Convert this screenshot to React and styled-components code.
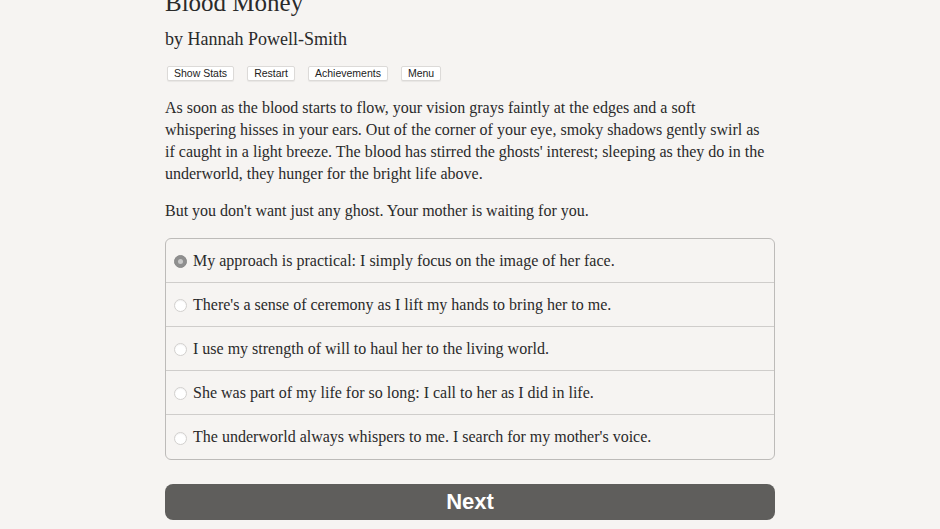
import { useState } from "react";
import styled, { createGlobalStyle } from "styled-components";

const GlobalStyle = createGlobalStyle`
  html, body {
    margin: 0;
    padding: 0;
    background: #f6f4f2;
  }
  body {
    font-family: "Liberation Serif", "DejaVu Serif", serif;
    color: #2a2a2a;
    overflow: hidden;
  }
`;

const choices = [
  "My approach is practical: I simply focus on the image of her face.",
  "There's a sense of ceremony as I lift my hands to bring her to me.",
  "I use my strength of will to haul her to the living world.",
  "She was part of my life for so long: I call to her as I did in life.",
  "The underworld always whispers to me. I search for my mother's voice.",
];

const introLines = [
  "As soon as the blood starts to flow, your vision grays faintly at the edges and a soft",
  "whispering hisses in your ears. Out of the corner of your eye, smoky shadows gently swirl as",
  "if caught in a light breeze. The blood has stirred the ghosts' interest; sleeping as they do in the",
  "underworld, they hunger for the bright life above.",
];

const App = () => {
  const [selected, setSelected] = useState(0);

  return (
    <>
      <GlobalStyle />
      <Page>
        <Title>Blood Money</Title>
        <Author>by Hannah Powell-Smith</Author>
        <Toolbar>
          <ToolButton>Show Stats</ToolButton>
          <ToolButton>Restart</ToolButton>
          <ToolButton>Achievements</ToolButton>
          <ToolButton>Menu</ToolButton>
        </Toolbar>
        <Paragraph>
          {introLines.map((line, i) => (
            <Line key={i}>{line}</Line>
          ))}
        </Paragraph>
        <Paragraph>But you don't want just any ghost. Your mother is waiting for you.</Paragraph>
        <ChoiceList>
          {choices.map((text, i) => (
            <Choice key={i} onClick={() => setSelected(i)}>
              <Radio checked={selected === i} />
              <span>{text}</span>
            </Choice>
          ))}
        </ChoiceList>
        <NextButton>Next</NextButton>
      </Page>
    </>
  );
};

export default App;

const Page = styled.div`
  width: 610px;
  margin: -14px auto 0;
  display: flex;
  flex-direction: column;
`;

const Title = styled.h1`
  margin: 0;
  font-size: 25px;
  font-weight: normal;
  line-height: 34px;
  color: #2a2a2a;
`;

const Author = styled.h2`
  margin: 6px 0 0;
  font-size: 18px;
  font-weight: normal;
  line-height: 26px;
  color: #2a2a2a;
`;

const Toolbar = styled.div`
  display: flex;
  gap: 13px;
  margin: 14px 0 0 2px;
`;

const ToolButton = styled.button`
  height: 15px;
  padding: 0 6px;
  font-family: "Liberation Sans", Arial, sans-serif;
  font-size: 10.5px;
  line-height: 13px;
  color: #222;
  background: #fff;
  border: 1px solid #dcdad8;
  border-radius: 2px;
  box-shadow: 0 1px 1px rgba(0, 0, 0, 0.06);
`;

const Paragraph = styled.p`
  margin: 16px 0 0;
  font-size: 16px;
  line-height: 22px;
  color: #2a2a2a;

  & + & {
    margin-top: 15px;
  }
`;

const Line = styled.span`
  display: block;
  white-space: nowrap;
`;

const ChoiceList = styled.div`
  margin-top: 16px;
  border: 1px solid #bdbbb9;
  border-radius: 6px;
  overflow: hidden;
`;

const Choice = styled.div`
  height: 43px;
  display: flex;
  align-items: center;
  gap: 6px;
  padding-left: 8px;
  font-size: 16px;
  color: #2a2a2a;
  cursor: pointer;

  & + & {
    border-top: 1px solid #cfcdcb;
  }

  &:last-child {
    height: 44px;
  }
`;

const Radio = styled.span`
  width: 13px;
  height: 13px;
  border-radius: 50%;
  box-sizing: border-box;
  flex-shrink: 0;
  margin-top: 2px;
  position: relative;
  background: ${(props) => (props.checked ? "#8f8f8f" : "#fff")};
  border: 1px solid ${(props) => (props.checked ? "#8a8a8a" : "#d2d0ce")};
  box-shadow: ${(props) => (props.checked ? "none" : "inset 0 1px 1px rgba(0,0,0,0.05)")};

  &::after {
    content: "";
    display: ${(props) => (props.checked ? "block" : "none")};
    position: absolute;
    left: 3px;
    top: 3px;
    width: 5px;
    height: 5px;
    border-radius: 50%;
    background: #c9c9c9;
  }
`;

const NextButton = styled.button`
  margin-top: 24px;
  height: 36px;
  border: none;
  border-radius: 8px;
  background: #5f5e5c;
  color: #fff;
  font-family: "Liberation Sans", Arial, sans-serif;
  font-weight: bold;
  font-size: 22px;
  cursor: pointer;
`;
